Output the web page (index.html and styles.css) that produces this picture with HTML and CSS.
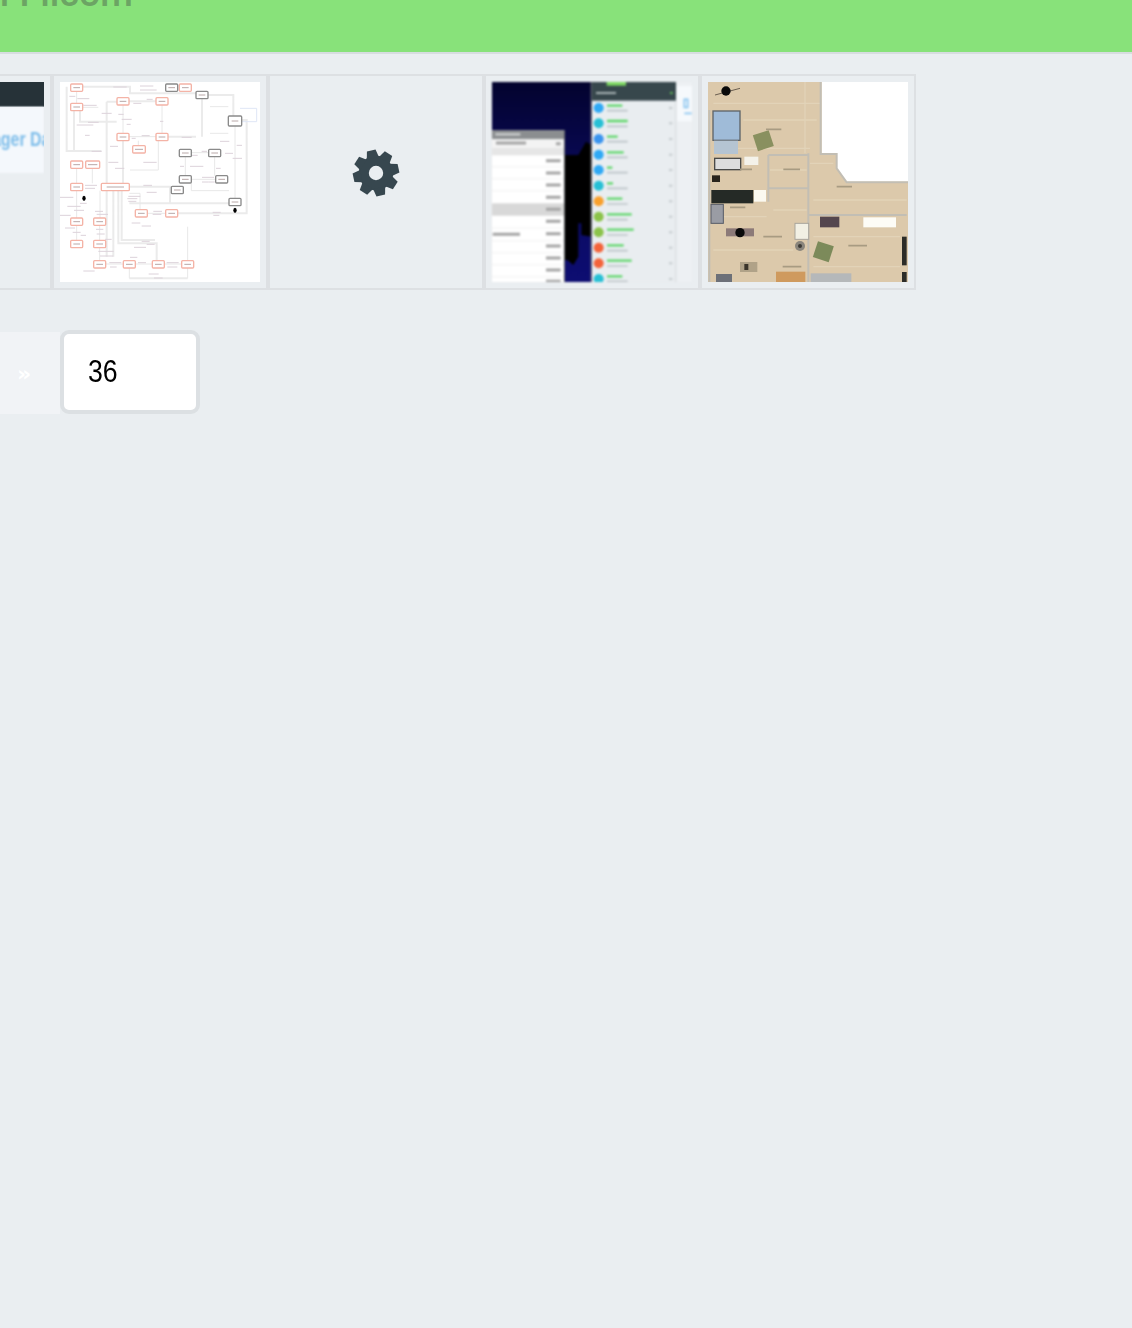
FILE: index.html
```html
<!DOCTYPE html>
<html lang="en">
<head>
    <meta charset="UTF-8">
    <meta name="viewport" content="width=device-width, initial-scale=1.0">
    <title>Filcom gallery</title>
    <link rel="stylesheet" href="styles.css">
</head>
<body>
    <!-- Green banner, its title runs off the top -->
    <header class="banner">
        <h1 class="banner-title">r Filcom</h1>
    </header>

    <!-- Thumbnails -->
    <section class="gallery">
        <div class="tile">
            <div class="shot shot-manager">
                <div class="manager-bar"></div>
                <div class="manager-body"><span class="manager-text">Manager Dashboard</span></div>
            </div>
        </div>

        <div class="tile">
            <svg class="shot shot-diagram" viewBox="30 36 600 600">
                <rect x="30" y="36" width="600" height="600" fill="#fff"/>
                <g class="wires-thick">
                    <path d="M50 50V243H154M72 122V245M90 122V155H200M170 95H201M170 95V340M219 212V340M237 94H318M354 200H438M456 86V200M474 75H550V140M575 150H590V430H383M238 400H537M238 350H360V400M170 362V560M190 362V560M205 362V520H320V572M215 362V510H315M98 50H240V70H438M238 625H413"/>
                </g>
                <g class="wires">
                    <path d="M80 64V100M219 105V190M336 105V190M237 200H318M555 168V385M406 260V317M494 260V317M424 248H476M424 328H497M424 340V362H537M80 362V444M150 362V444M80 466V511M149 466V511M238 370H270V419M292 430H347M149 533V572M238 594V625M413 625V594M167 582H220M256 582H307M343 582H395M413 572V470M127 295V340M80 295V340M265 212V227M240 300H325V212M98 112H145M480 110H535M480 190H535"/>
                    <path class="wire-blue" d="M570 115H620V155H575"/>
                </g>
                <g class="wire-labels">
                    <path d="M190 51h40M270 48h40M270 60h50M58 79h18M82 86h36M100 106h40M114 157h32M80 165h50M105 196h14M155 130h30M205 133h16M215 148h30M230 163h12M290 88h18M250 100h24M330 154h10M275 197h24M180 229h24M175 277h30M195 295h28M280 277h40M125 244h30M245 205h12M395 202h30M510 214h28M455 244h16M425 256h18M420 289h40M390 289h12M498 295h14M525 250h24M560 226h16M548 265h28M456 322h36M456 336h20M476 336h18M105 346h36M105 355h30M30 382h40M90 400h20M52 409h40M72 421h30M30 436h32M135 424h24M140 433h34M45 474h30M68 487h24M92 496h16M138 478h22M140 492h24M165 508h20M235 379h36M232 386h30M235 394h24M280 346h26M290 367h30M245 459h26M275 468h28M310 424h26M308 433h26M488 427h24M490 436h18M275 514h24M290 523h24M252 532h36M240 562h22M145 544h46M150 558h40M100 603h34M178 578h36M180 591h20M264 578h24M350 578h36M352 591h30M296 612h30M312 624h26"/>
                </g>
                <g class="box-red">
                    <rect x="62" y="42" width="36" height="22"/><rect x="62" y="100" width="36" height="22"/><rect x="201" y="83" width="36" height="22"/><rect x="318" y="83" width="36" height="22"/><rect x="201" y="190" width="36" height="22"/><rect x="318" y="190" width="36" height="22"/><rect x="248" y="227" width="38" height="22"/><rect x="62" y="273" width="36" height="22"/><rect x="107" y="273" width="42" height="22"/><rect x="62" y="340" width="36" height="22"/><rect x="154" y="340" width="84" height="22"/><rect x="256" y="419" width="36" height="22"/><rect x="347" y="419" width="36" height="22"/><rect x="62" y="444" width="36" height="22"/><rect x="131" y="444" width="36" height="22"/><rect x="62" y="511" width="36" height="22"/><rect x="131" y="511" width="36" height="22"/><rect x="131" y="572" width="36" height="22"/><rect x="220" y="572" width="36" height="22"/><rect x="307" y="572" width="36" height="22"/><rect x="395" y="572" width="36" height="22"/><rect x="388" y="42" width="36" height="22"/>
                </g>
                <g class="box-black">
                    <rect x="347" y="42" width="36" height="22"/><rect x="438" y="64" width="36" height="22"/><rect x="388" y="238" width="36" height="22"/><rect x="476" y="238" width="36" height="22"/><rect x="388" y="317" width="36" height="22"/><rect x="497" y="317" width="36" height="22"/><rect x="364" y="349" width="36" height="22"/><rect x="537" y="385" width="36" height="22"/><rect x="535" y="138" width="40" height="30"/>
                </g>
                <path class="box-text" d="M70 53h20M70 111h20M209 94h20M326 94h20M209 201h20M326 201h20M255 238h24M70 284h20M114 284h28M70 351h20M170 351h52M264 430h20M355 430h20M70 455h20M139 455h20M70 522h20M139 522h20M139 583h20M228 583h20M315 583h20M403 583h20M396 53h20M355 53h20M446 75h20M396 249h20M484 249h20M396 328h20M505 328h20M372 360h20M545 396h20M545 153h20"/>
                <ellipse cx="102" cy="385" rx="5" ry="8"/>
                <ellipse cx="555" cy="421" rx="5" ry="8"/>
            </svg>
        </div>

        <div class="tile tile-empty">
            <svg class="cog" viewBox="-24 -24 48 48">
                <circle class="cog-ring" r="12.2"/>
                <g class="cog-teeth">
                    <polygon points="-6.2,-15 -4.4,-23 4.4,-23 6.2,-15" transform="rotate(-12)"/>
                    <polygon points="-6.2,-15 -4.4,-23 4.4,-23 6.2,-15" transform="rotate(33)"/>
                    <polygon points="-6.2,-15 -4.4,-23 4.4,-23 6.2,-15" transform="rotate(78)"/>
                    <polygon points="-6.2,-15 -4.4,-23 4.4,-23 6.2,-15" transform="rotate(123)"/>
                    <polygon points="-6.2,-15 -4.4,-23 4.4,-23 6.2,-15" transform="rotate(168)"/>
                    <polygon points="-6.2,-15 -4.4,-23 4.4,-23 6.2,-15" transform="rotate(213)"/>
                    <polygon points="-6.2,-15 -4.4,-23 4.4,-23 6.2,-15" transform="rotate(258)"/>
                    <polygon points="-6.2,-15 -4.4,-23 4.4,-23 6.2,-15" transform="rotate(303)"/>
                </g>
            </svg>
        </div>

        <div class="tile">
            <svg class="shot shot-screens" viewBox="36 36 600 600">
                <defs>
                    <linearGradient id="night" x1="0" y1="0" x2="0" y2="1">
                        <stop offset="0" stop-color="#03032e"/>
                        <stop offset="0.5" stop-color="#0a0a5c"/>
                        <stop offset="1" stop-color="#0d0d72"/>
                    </linearGradient>
                </defs>
                <rect x="36" y="36" width="600" height="600" fill="url(#night)"/>
                <path d="M252 255H295L318 215L335 225V500L304 495V460H295V560L280 585L262 570H252Z" fill="#000"/>
                <!-- table window -->
                <rect x="36" y="180" width="216" height="456" fill="#fff"/>
                <rect x="252" y="180" width="3" height="456" fill="#5c5f62"/>
                <rect x="36" y="180" width="216" height="28" fill="#8b8e90"/>
                <rect x="46" y="190" width="75" height="6" fill="#d5d8d8"/>
                <rect x="36" y="208" width="216" height="26" fill="#f3f3f3"/>
                <rect x="36" y="234" width="216" height="22" fill="#e6e6e6"/>
                <rect x="36" y="400" width="216" height="37" fill="#d8d8d8"/>
                <g class="table-lines">
                    <path d="M36 290H252M36 326H252M36 362H252M36 474H252M36 512H252M36 548H252M36 584H252M36 620H252"/>
                </g>
                <g class="table-values">
                    <path d="M198 272h44M198 309h44M198 345h44M198 382h44M198 418h44M198 454h44M198 491h44M198 528h44M198 564h44M198 600h44M198 634h44M38 493h82M48 219h90M228 221h14"/>
                </g>
                <!-- right pane behind the list -->
                <rect x="587" y="36" width="49" height="600" fill="#edf0f3"/>
                <rect x="590" y="48" width="46" height="106" fill="#f6f9fc"/>
                <path d="M613 88h10v24h-10zM613 130h22" class="side-text"/>
                <!-- contact list -->
                <rect x="335" y="36" width="253" height="600" fill="#e9edf0"/>
                <rect x="332" y="36" width="3" height="600" fill="#6c7074"/>
                <rect x="586" y="92" width="3" height="544" fill="#d4d8db"/>
                <rect x="335" y="36" width="253" height="56" fill="#37474c"/>
                <rect x="380" y="36" width="58" height="11" fill="#7dd862"/>
                <rect x="348" y="66" width="60" height="6" fill="#aab4b6"/>
                <rect x="570" y="66" width="8" height="6" fill="#5fb658"/>
                <circle cx="356" cy="114" r="15" fill="#2fa9f5"/>
                <circle cx="356" cy="160" r="15" fill="#26c0d5"/>
                <circle cx="356" cy="207" r="15" fill="#3a94ef"/>
                <circle cx="356" cy="254" r="15" fill="#2fa9f5"/>
                <circle cx="356" cy="300" r="15" fill="#2fa9f5"/>
                <circle cx="356" cy="347" r="15" fill="#26c0d5"/>
                <circle cx="356" cy="394" r="15" fill="#f9a02c"/>
                <circle cx="356" cy="440" r="15" fill="#8bc34a"/>
                <circle cx="356" cy="487" r="15" fill="#8bc34a"/>
                <circle cx="356" cy="533" r="15" fill="#f4633a"/>
                <circle cx="356" cy="580" r="15" fill="#f4633a"/>
                <circle cx="356" cy="627" r="15" fill="#26c0d5"/>
                <g class="contact-names">
                    <path d="M381 107h46M381 153h62M381 200h32M381 247h50M381 293h16M381 340h18M381 386h46M381 433h74M381 479h80M381 526h50M381 572h74M381 619h46"/>
                </g>
                <g class="contact-dates">
                    <path d="M381 122h62M381 169h62M381 215h62M381 262h62M381 308h62M381 355h62M381 402h62M381 449h62M381 495h62M381 542h62M381 588h62M381 634h62"/>
                </g>
                <g class="contact-marks">
                    <path d="M567 114h10M567 160h10M567 207h10M567 254h10M567 300h10M567 347h10M567 394h10M567 440h10M567 487h10M567 533h10M567 580h10M567 627h10"/>
                </g>
            </svg>
        </div>

        <div class="tile">
            <svg class="shot shot-plan" viewBox="24 36 600 600">
                <rect x="24" y="36" width="600" height="600" fill="#dcc9ab"/>
                <path class="plan-grain" d="M40 100H360M60 235H330M210 300H320M340 390H620M220 420H320M40 440H200M40 540H280M340 500H600M340 590H600M130 150H350M330 280H400M315 36V250"/>
                <polygon points="365,36 624,36 624,335 440,335 410,295 410,252 365,252" fill="#fff"/>
                <g class="plan-walls">
                    <path d="M28 120V636M362 36V252H410V295L440 337H624M205 255H325M205 255V395M205 355H325M325 250V636M325 435H620"/>
                </g>
                <path d="M45 75L120 55" stroke="#6a5e50" stroke-width="3"/>
                <circle cx="78" cy="63" r="14" fill="#0a0a0a"/>
                <rect x="39" y="123" width="81" height="88" fill="#9fbbd8" stroke="#5e6468" stroke-width="4"/>
                <rect x="42" y="212" width="72" height="40" fill="#b5c4d2"/>
                <rect x="165" y="187" width="50" height="50" fill="#89905f" transform="rotate(-18 190 212)"/>
                <rect x="44" y="265" width="78" height="34" fill="#ddd" stroke="#4a4a48" stroke-width="4"/>
                <rect x="133" y="260" width="42" height="25" fill="#f4f2ea"/>
                <rect x="36" y="316" width="24" height="20" fill="#2a241c"/>
                <rect x="34" y="360" width="126" height="40" fill="#252a26"/>
                <rect x="162" y="360" width="36" height="35" fill="#fbf9f0"/>
                <rect x="33" y="403" width="37" height="57" fill="#9a9ca4" stroke="#565a66" stroke-width="3"/>
                <rect x="78" y="475" width="84" height="24" fill="#8c7a78"/>
                <circle cx="120" cy="488" r="14" fill="#0a0a0a"/>
                <rect x="285" y="460" width="41" height="48" fill="#f2f0e4" stroke="#a8a59c" stroke-width="3"/>
                <circle cx="300" cy="528" r="15" fill="#8a857c"/>
                <circle cx="300" cy="528" r="6" fill="#3c3a36"/>
                <rect x="345" y="520" width="50" height="50" fill="#7c8a5a" transform="rotate(18 370 545)"/>
                <rect x="360" y="440" width="58" height="32" fill="#54464e"/>
                <rect x="490" y="442" width="98" height="30" fill="#fdfcf6"/>
                <rect x="120" y="576" width="52" height="30" fill="#b0a288"/>
                <rect x="133" y="582" width="12" height="18" fill="#3a342a"/>
                <rect x="48" y="612" width="48" height="24" fill="#6d7078"/>
                <rect x="228" y="605" width="88" height="31" fill="#cf9a5e"/>
                <rect x="332" y="610" width="122" height="26" fill="#b5b8ba"/>
                <rect x="606" y="500" width="14" height="86" fill="#2c2c28"/>
                <rect x="606" y="606" width="14" height="30" fill="#2c2c28"/>
                <path class="plan-labels" d="M250 298h50M410 350h46M90 412h46M190 500h56M445 527h56M248 590h56M198 178h46M120 298h36"/>
            </svg>
        </div>
    </section>

    <!-- Pager -->
    <nav class="pager">
        <a class="pager-next" href="#">&raquo;</a>
        <div class="pager-input"><span class="pager-value">36</span></div>
    </nav>
</body>
</html>
```

FILE: styles.css
```css
body {
    margin: 0;
    height: 1328px;
    overflow: hidden;
    background: #eaeef1;
    font-family: 'Roboto', sans-serif;
}

/* Banner */
.banner {
    height: 52px;
    background: #88e27a;
    border-bottom: 2px solid #d7dde0;
    overflow: hidden;
}

.banner-title {
    margin: -28px 0 0 0;
    font-size: 37.5px;
    line-height: 42px;
    font-weight: 500;
    word-spacing: -3px;
    color: #6ca464;
    white-space: nowrap;
}

/* Thumbnails */
.gallery {
    display: flex;
    margin: 20px 0 0 -164px;
}

.tile {
    flex: none;
    width: 200px;
    height: 200px;
    padding: 6px;
    border: 2px solid #dde0e3;
}

.tile-empty {
    display: flex;
    align-items: center;
    justify-content: center;
}

.shot {
    display: block;
    width: 200px;
    height: 200px;
}

.shot-diagram {
    filter: blur(0.7px);
}

.shot-screens {
    filter: blur(0.8px);
}

.shot-plan {
    filter: blur(0.7px);
}

.shot-manager {
    overflow: hidden;
}

.manager-bar {
    height: 24px;
    background: #263238;
    border-bottom: 1px solid #5c666c;
}

.manager-body {
    display: flex;
    align-items: center;
    height: 66px;
    background: #f4f8fc;
    filter: blur(0.9px);
}

.manager-text {
    margin: 0 0 3px 116px;
    color: #7dbdea;
    font-size: 21px;
    font-weight: 700;
    font-family: 'Liberation Sans', sans-serif;
    white-space: nowrap;
    transform: scaleX(0.76);
    transform-origin: left center;
}

/* Diagram strokes */
.wires-thick path {
    fill: none;
    stroke: #ebebeb;
    stroke-width: 6;
}

.wires path {
    fill: none;
    stroke: #e8e8e8;
    stroke-width: 3;
}

.wires .wire-blue {
    stroke: #dfe6f6;
}

.wire-labels path {
    fill: none;
    stroke: #dcd2da;
    stroke-width: 3;
}

.box-red rect {
    fill: #fff;
    stroke: #f4b3a6;
    stroke-width: 4;
    rx: 3px;
}

.box-black rect {
    fill: #fff;
    stroke: #8a8a8a;
    stroke-width: 4;
    rx: 3px;
}

.box-text {
    fill: none;
    stroke: #b9a8a8;
    stroke-width: 3;
}

/* Screens thumbnail */
.table-lines path {
    fill: none;
    stroke: #ececec;
    stroke-width: 2;
}

.table-values path {
    fill: none;
    stroke: #a4a4a4;
    stroke-width: 9;
}

.contact-names path {
    fill: none;
    stroke: #5fd66a;
    stroke-width: 7;
}

.contact-dates path {
    fill: none;
    stroke: #bcc3c7;
    stroke-width: 5;
}

.contact-marks path {
    fill: none;
    stroke: #c5cbce;
    stroke-width: 6;
}

.side-text {
    fill: none;
    stroke: #8cc6f0;
    stroke-width: 5;
}

/* Floor plan */
.plan-grain {
    fill: none;
    stroke: #e2d3b8;
    stroke-width: 4;
}

.plan-walls path {
    fill: none;
    stroke: #c2beb4;
    stroke-width: 6;
}

.plan-labels {
    fill: none;
    stroke: #a89b82;
    stroke-width: 5;
}

/* Cog */
.cog {
    width: 48px;
    height: 48px;
    margin: 0 0 18px 0;
}

.cog-ring {
    fill: none;
    stroke: #37474f;
    stroke-width: 10;
}

.cog-teeth {
    fill: #37474f;
}

/* Pager */
.pager {
    display: flex;
    align-items: flex-end;
    margin-top: 40px;
}

.pager-next {
    box-sizing: border-box;
    width: 60px;
    height: 82px;
    padding-left: 17px;
    display: flex;
    align-items: center;
    background: #f1f3f6;
    color: #fff;
    font-size: 22px;
    font-family: 'DejaVu Sans', sans-serif;
    font-weight: 700;
    text-decoration: none;
}

.pager-input {
    box-sizing: border-box;
    display: flex;
    align-items: center;
    width: 140px;
    height: 84px;
    padding-left: 24px;
    border: 4px solid #dce0e3;
    border-radius: 9px;
    background: #fff;
    color: #000;
    font-size: 31px;
    font-family: 'Liberation Sans', sans-serif;
}

.pager-value {
    transform: scaleX(0.86);
    transform-origin: left center;
}
```
